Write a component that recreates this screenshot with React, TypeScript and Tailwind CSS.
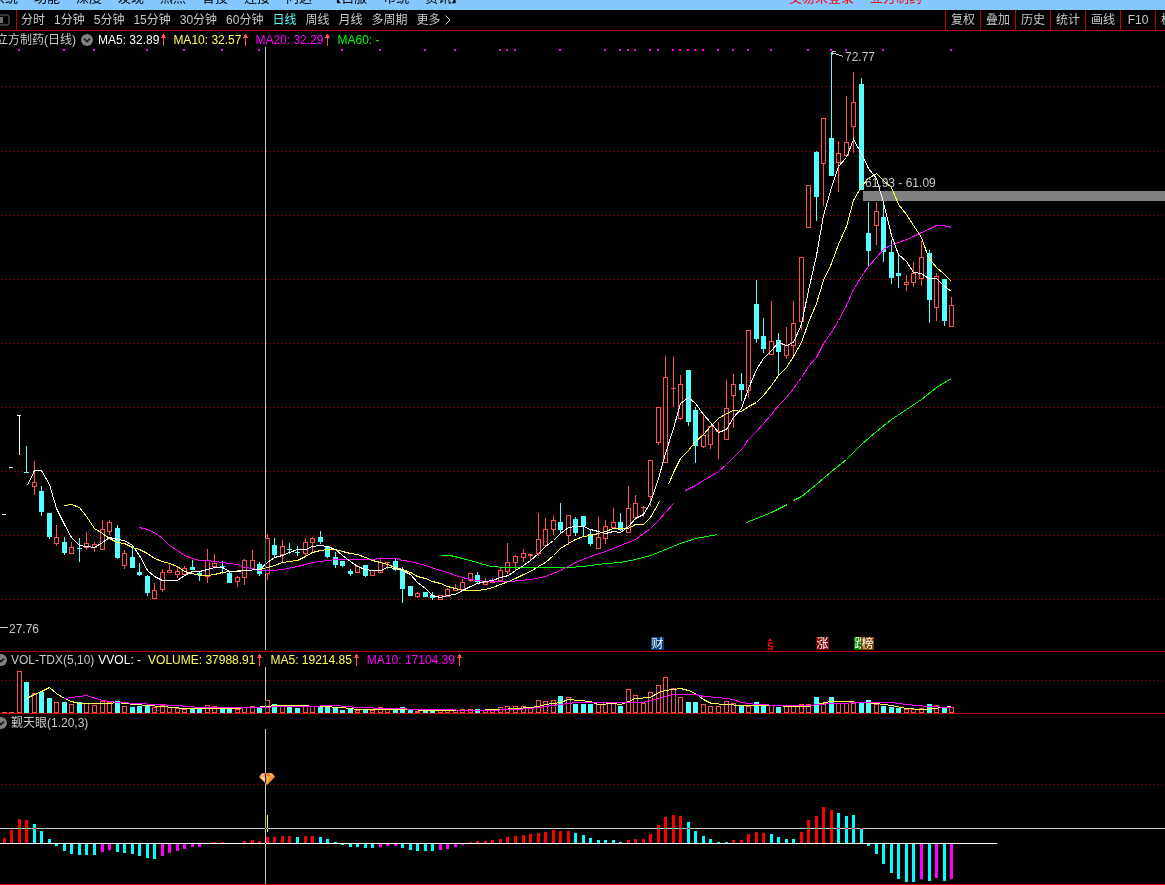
import { useState } from "react";
import clsx from "clsx";

type Kind = "r" | "c" | "w";
type Candle = [Kind, number, number, number, number];
type OscBar = [number, "r" | "c" | "m"];

const RED = "#ff5050";
const CYAN = "#54ffff";
const GRID = "#c00000";
const GRAY = "#c8c8c8";

const menus = ["系统", "功能", "深度", "发现", "热点", "智投", "连接", "问达"];
const extraMenus = ["自服", "市统", "资讯"];
const periods = ["分时", "1分钟", "5分钟", "15分钟", "30分钟", "60分钟", "日线", "周线", "月线", "多周期"];
const tools = ["复权", "叠加", "历史", "统计", "画线", "F10"];

// kind, high, body top, body bottom, low
const candles: Candle[] = [
  ["w", 514, 514, 515, 515], ["w", 467, 467, 468, 468], ["w", 415, 415, 416, 455], ["c", 446, 472, 473, 473],
  ["r", 461, 482, 487, 495], ["c", 486, 491, 512, 516], ["c", 513, 513, 537, 539], ["r", 525, 537, 544, 546],
  ["c", 537, 542, 553, 555], ["r", 542, 547, 554, 554], ["c", 538, 548, 549, 562], ["r", 532, 543, 548, 550],
  ["r", 542, 544, 548, 552], ["r", 520, 529, 550, 550], ["r", 520, 522, 532, 535], ["c", 525, 528, 558, 559],
  ["r", 550, 553, 566, 569], ["c", 545, 557, 568, 568], ["c", 563, 572, 575, 576], ["c", 575, 576, 593, 596],
  ["r", 583, 590, 599, 599], ["r", 569, 572, 590, 592], ["r", 564, 570, 573, 573], ["r", 567, 571, 575, 578],
  ["r", 566, 568, 575, 575], ["c", 560, 567, 570, 570], ["c", 571, 573, 575, 581], ["r", 549, 560, 577, 583],
  ["r", 554, 563, 567, 567], ["c", 561, 566, 567, 574], ["c", 571, 573, 583, 583], ["r", 576, 577, 582, 587],
  ["r", 559, 560, 578, 585], ["r", 550, 560, 569, 569], ["c", 562, 564, 574, 576], ["r", 534, 538, 574, 580],
  ["c", 538, 545, 555, 557], ["r", 540, 546, 555, 562], ["c", 543, 549, 550, 554], ["c", 546, 552, 553, 556],
  ["r", 538, 542, 554, 556], ["r", 537, 538, 543, 552], ["c", 531, 537, 542, 544], ["c", 546, 546, 557, 558],
  ["c", 552, 557, 565, 568], ["c", 561, 561, 566, 567], ["c", 569, 571, 574, 576], ["r", 565, 566, 573, 573],
  ["c", 565, 565, 576, 577], ["r", 570, 570, 576, 576], ["r", 558, 562, 573, 573], ["r", 562, 562, 563, 569],
  ["c", 558, 561, 570, 571], ["c", 567, 570, 589, 603], ["c", 586, 586, 596, 596], ["r", 592, 593, 597, 598],
  ["c", 592, 592, 597, 597], ["c", 592, 595, 598, 600], ["r", 595, 595, 600, 600], ["r", 588, 589, 597, 597],
  ["r", 584, 588, 591, 591], ["r", 579, 582, 590, 591], ["r", 573, 573, 581, 582], ["c", 572, 575, 582, 584],
  ["r", 578, 582, 585, 585], ["r", 578, 582, 583, 583], ["r", 567, 570, 581, 581], ["r", 543, 562, 572, 574],
  ["r", 555, 556, 563, 570], ["r", 549, 553, 558, 562], ["r", 554, 554, 556, 560], ["r", 513, 539, 554, 556],
  ["r", 518, 529, 546, 546], ["r", 516, 520, 530, 535], ["c", 503, 522, 530, 534], ["r", 515, 515, 536, 545],
  ["c", 517, 519, 533, 536], ["c", 516, 516, 526, 536], ["c", 530, 534, 544, 546], ["r", 517, 537, 549, 549],
  ["r", 520, 526, 539, 544], ["r", 508, 522, 528, 528], ["c", 513, 522, 530, 531], ["r", 486, 508, 533, 533],
  ["r", 495, 503, 518, 520], ["r", 506, 507, 508, 517], ["r", 460, 460, 497, 506], ["r", 407, 407, 443, 445],
  ["r", 356, 377, 463, 463], ["r", 357, 388, 389, 407], ["r", 375, 384, 419, 420], ["c", 370, 370, 422, 426],
  ["c", 407, 410, 446, 463], ["r", 413, 435, 447, 448], ["r", 426, 426, 445, 449], ["r", 422, 431, 432, 459],
  ["r", 380, 408, 440, 440], ["r", 374, 384, 396, 428], ["c", 373, 384, 390, 401], ["r", 330, 330, 391, 398],
  ["c", 280, 304, 339, 343], ["c", 318, 336, 349, 353], ["r", 301, 341, 355, 355], ["c", 333, 340, 352, 376],
  ["r", 327, 345, 356, 359], ["r", 301, 323, 346, 358], ["r", 257, 257, 322, 330], ["r", 185, 185, 228, 228],
  ["c", 151, 152, 197, 221], ["r", 118, 118, 164, 206], ["c", 52, 138, 176, 176], ["r", 141, 153, 163, 192],
  ["r", 96, 142, 156, 156], ["r", 72, 102, 127, 153], ["c", 78, 84, 190, 190], ["c", 202, 233, 251, 267],
  ["r", 202, 211, 226, 245], ["c", 205, 217, 252, 262], ["c", 240, 252, 278, 284], ["c", 255, 273, 276, 288],
  ["r", 275, 282, 285, 291], ["r", 262, 273, 283, 287], ["r", 241, 257, 279, 286], ["c", 250, 253, 300, 323],
  ["r", 273, 276, 308, 321], ["c", 279, 279, 321, 326], ["r", 297, 305, 327, 327],
];

const volumes = [
  712, 712, 671, 682, 693, 692, 698, 702, 702, 704, 702, 703, 705, 701, 702, 701, 706, 707, 706, 705, 707, 705, 707,
  708, 709, 708, 709, 705, 706, 709, 709, 709, 707, 706, 708, 700, 704, 706, 706, 708, 706, 706, 706, 706, 708, 710,
  709, 710, 709, 710, 707, 709, 709, 707, 709, 711, 710, 710, 710, 710, 710, 709, 709, 709, 710, 710, 707, 706, 706,
  706, 708, 700, 701, 700, 696, 697, 704, 704, 704, 704, 702, 703, 706, 689, 695, 703, 692, 685, 677, 688, 697, 702,
  702, 704, 706, 706, 701, 703, 706, 706, 702, 705, 705, 707, 706, 706, 704, 704, 697, 703, 697, 703, 703, 703, 703,
  700, 704, 706, 707, 708, 709, 709, 708, 704, 705, 708, 707,
];

const osc: OscBar[] = [
  [838, "r"], [830, "r"], [819, "r"], [820, "r"], [824, "c"], [831, "c"], [839, "c"], [846, "c"], [851, "c"],
  [854, "c"], [855, "c"], [855, "c"], [855, "c"], [852, "m"], [850, "m"], [852, "c"], [853, "c"], [854, "c"],
  [856, "c"], [858, "c"], [859, "c"], [856, "m"], [853, "m"], [851, "m"], [849, "m"], [847, "m"], [847, "m"],
  [843, "r"], [842, "r"], [842, "r"], [843, "r"], [843, "r"], [841, "r"], [840, "r"], [841, "r"], [837, "r"],
  [837, "r"], [836, "r"], [836, "r"], [837, "c"], [836, "r"], [836, "r"], [837, "c"], [839, "c"], [842, "c"],
  [845, "c"], [847, "c"], [847, "c"], [848, "c"], [848, "c"], [847, "m"], [846, "m"], [846, "m"], [848, "c"],
  [850, "c"], [851, "c"], [851, "c"], [851, "c"], [850, "m"], [849, "m"], [847, "m"], [845, "m"], [842, "r"],
  [841, "r"], [841, "r"], [840, "r"], [839, "r"], [837, "r"], [836, "r"], [835, "r"], [834, "r"], [833, "r"],
  [832, "r"], [830, "r"], [831, "r"], [831, "r"], [833, "c"], [835, "c"], [838, "c"], [840, "c"], [840, "c"],
  [840, "c"], [842, "c"], [840, "r"], [839, "r"], [839, "r"], [834, "r"], [825, "r"], [817, "r"], [815, "r"],
  [816, "r"], [822, "c"], [831, "c"], [836, "c"], [839, "c"], [842, "c"], [842, "c"], [840, "r"], [840, "r"],
  [834, "r"], [832, "r"], [833, "r"], [834, "c"], [837, "c"], [839, "c"], [839, "c"], [832, "r"], [820, "r"],
  [816, "r"], [807, "r"], [810, "r"], [813, "c"], [816, "c"], [815, "c"], [828, "c"], [846, "c"], [854, "c"],
  [864, "c"], [873, "c"], [879, "c"], [882, "c"], [882, "c"], [879, "m"], [881, "c"], [878, "m"], [881, "c"],
  [879, "m"],
];
const oscFill = { r: "#ff0000", c: "#00ffff", m: "#ff00ff" };

const priceLines: [string, string][] = [
  ["#00ff00", "440,555 450,555 462,558 477,562 490,566 507,567 568,567 583,566 605,563 620,562 635,559 650,555 665,549 680,543 695,538 717,534"],
  ["#00ff00", "746,522 756,518 771,512 787,504"],
  ["#00ff00", "793,500 801,496 816,484 831,471 846,459 853,452 861,444 876,431 891,419 906,409 921,399 936,387 951,378"],
  ["#ff00ff", "139,527 147,529 154,532 162,538 169,545 177,550 184,555 192,558 199,560 207,560 222,562 237,564 244,567 252,568 259,570 274,570 282,569 297,566 305,564 312,562 320,561 335,559 365,559 387,558 395,558 402,560 410,561 425,565 440,570 447,572 455,575 462,577 470,579 477,580 485,581 510,581 530,579 545,576 560,570 575,562 590,556 605,551 620,545 635,539 643,533 650,528 658,520 665,512 673,503"],
  ["#ff00ff", "685,490 695,485 703,480 710,476 718,471 726,464 733,457 741,449 748,439 756,431 763,423 771,414 778,405 786,397 793,388 801,377 808,366 816,357 823,343 831,332 838,320 846,305 853,289 861,276 868,266 876,257 883,249 891,244 898,242 906,239 913,236 921,232 928,229 936,225 943,225 951,227"],
  ["#ffff54", "64,505 71,504 79,507 86,516 94,528 102,533 109,538 117,542 124,543 132,547 139,549 147,553 154,558 162,561 169,563 177,566 184,571 192,573 199,575 207,575 214,574 222,572 229,571 244,570 259,569 267,567 274,565 282,562 289,561 297,560 305,556 312,552 320,550 327,549 335,549 342,551 350,553 357,554 365,557 372,560 380,562 387,564 395,567 402,569 410,572 417,576 425,578 432,581 440,583 447,586 455,588 462,590 477,590 485,589 492,587 500,584 508,581 515,578 523,574 530,571 538,566 545,562 553,555 560,548 568,543 575,539 583,536 590,535 598,533 605,531 613,528 628,528 635,524 643,524 650,517 659,501"],
  ["#ffff54", "668,484 673,472 680,458 688,450 695,441 703,434 710,426 718,418 726,413 733,410 741,411 748,406 756,402 763,395 771,385 778,375 786,367 793,356 801,342 808,322 816,303 823,280 831,263 838,244 846,226 853,200 861,186 868,178 876,173 883,180 891,187 898,204 906,214 913,225 921,237 928,257 936,267 943,273 951,281"],
  ["#ffffff", "27,485 34,470 41,470 49,484 56,508 64,524 71,537 79,545 86,546 94,547 102,542 109,537 117,539 124,540 132,545 139,555 147,570 154,576 162,580 177,580 184,575 192,571 199,571 207,569 214,567 222,567 229,571 237,571 244,570 259,569 267,562 274,557 282,555 289,552 297,549 305,549 312,546 320,545 327,546 335,549 342,555 350,561 357,566 365,569 372,570 380,570 387,567 395,568 402,570 410,574 417,582 425,588 432,595 440,597 447,595 455,594 462,590 470,586 477,583 485,581 492,580 500,577 508,575 515,570 523,565 530,560 538,553 545,546 553,540 560,533 568,527 575,526 583,526 590,529 598,531 605,533 613,531 620,532 628,526 635,518 643,514 650,502 658,478 665,453 673,428 680,403 688,397 695,403 703,414 710,422 718,432 726,429 733,417 741,408 748,388 756,369 763,358 771,350 778,342 786,345 793,342 801,324 808,290 816,255 823,215 831,187 838,166 846,157 853,139 861,153 868,168 876,178 883,202 891,235 898,254 906,261 913,272 921,273 928,278 936,278 943,285 951,291"],
];

const volumeLines: [string, string][] = [
  ["#ffff54", "26,698 34,694 41,691 49,687 56,693 64,698 71,701 79,703 109,703 117,702 124,703 147,705 162,706 184,708 207,708 229,708 252,707 267,706 274,705 297,705 320,706 342,707 357,709 410,709 425,710 470,710 500,709 515,708 530,707 538,706 545,704 560,702 568,699 590,701 598,704 613,703 620,704 628,701 635,698 650,697 658,692 665,690 673,689 680,688 688,690 695,693 703,699 711,703 726,704 741,705 771,705 793,706 808,706 816,704 830,701 846,701 861,702 876,703 891,705 906,708 921,709 943,707 951,706"],
  ["#ff00ff", "64,698 86,695 102,700 117,702 139,703 154,704 177,705 199,707 259,707 282,706 305,706 335,705 357,707 387,708 425,709 485,710 515,709 530,708 545,706 560,704 575,702 643,702 658,698 673,694 695,694 703,696 718,697 733,699 741,702 756,704 780,705 808,705 830,703 868,702 891,702 906,704 928,706 951,707"],
];

const signalDots = [
  18, 63, 93, 146, 183, 221, 258, 341, 379, 424, 454, 499, 506, 514, 559, 604, 619, 627, 634, 649, 657, 672, 679, 687,
  694, 702, 717, 732, 747, 770, 807, 830, 845, 882, 950,
];

const barX = (i: number) => Math.floor(4.29 + 7.518 * i);

function GridLine({ y }: { y: number }) {
  return <line x1="2" x2="100%" y1={y + 0.5} y2={y + 0.5} stroke={GRID} strokeDasharray="1 3" />;
}

function Crosshair({ top, bottom }: { top: number; bottom: number }) {
  return <rect x="265" y={top} width="1" height={bottom - top} fill={GRAY} className="mix-blend-difference" />;
}

function Lines({ data }: { data: [string, string][] }) {
  return (
    <g fill="none" transform="translate(0.5 0.5)">
      {data.map(([color, points], i) => (
        <polyline key={i} points={points} stroke={color} />
      ))}
    </g>
  );
}

function UpArrow() {
  return (
    <svg className="ml-px h-3 w-[7px] shrink-0" viewBox="0 0 7 12" shapeRendering="crispEdges" aria-hidden="true">
      <path d="M3 0h1v1h1v2h1v1H1V3h1V1h1z M3 4h1v8H3z" fill={RED} />
    </svg>
  );
}

function Toggle({ label }: { label: string }) {
  return (
    <button type="button" aria-label={label} className="h-3 w-3 shrink-0">
      <svg viewBox="0 0 12 12" className="h-3 w-3">
        <circle cx="6" cy="6" r="6" fill="#808080" />
        <path d="M3 4.5 6 7.5 9 4.5" fill="none" stroke="#141414" strokeWidth="1.6" />
      </svg>
    </button>
  );
}

function Badge({ x, fill, text, width = 13 }: { x: number; fill: string; text: string; width?: number }) {
  return (
    <g>
      <path d={`M${x} 637h${width - 1}l1 1v12h-${width}z`} fill={fill} />
      <text x={x + 0.5} y="648" fill="#ffffff">
        {text}
      </text>
    </g>
  );
}

function PriceChart() {
  return (
    <svg className="block h-[604px] w-full text-xs" shapeRendering="crispEdges" role="img" aria-label="日线">
      <g transform="translate(0 -47)">
        {[86, 151, 215, 279, 343, 407, 471, 535, 599].map((y) => (
          <GridLine key={y} y={y} />
        ))}
        {signalDots.map((x) => (
          <rect key={x} x={x} y="49" width="2" height="2" fill="#ff00ff" />
        ))}
        <rect x="863" y="191" width="100%" height="10" fill="#808080" />
        {candles.map(([kind, high, top, bottom, low], i) => {
          const x = barX(i);
          const color = kind === "r" ? RED : kind === "c" ? CYAN : "#ffffff";
          const hollow = kind === "r" && bottom - top > 2;
          return (
            <g key={i} fill={color}>
              <rect x={x} y={high} width="1" height={low - high} />
              <rect x={x - 2} y={top} width={kind === "w" ? 4 : 5} height={bottom - top} />
              {hollow && <rect x={x - 1} y={top + 1} width="3" height={bottom - top - 2} fill="#000000" />}
            </g>
          );
        })}
        <Lines data={priceLines} />
        <path d="M832 51.5h4M832.5 51v4M832 52.5l11 4" fill="none" stroke={GRAY} />
        <rect x="0" y="627" width="8" height="1" fill={GRAY} />
        <g fill={GRAY}>
          <text x="845" y="61">72.77</text>
          <text x="865" y="187">61.93 - 61.09</text>
          <text x="9" y="633">27.76</text>
        </g>
        <Badge x={651} fill="#003c78" text="财" />
        <g fill="#ff0000">
          <path d="M769 639h2v1h1v1h-4v-1h1z" />
          <text x="767" y="650" className="text-[10px] font-bold">S</text>
        </g>
        <Badge x={816} fill="#800000" text="涨" />
        <Badge x={854} fill="#008000" text="跌" />
        <Badge x={861} fill="#804000" text="榜" />
        <Crosshair top={47} bottom={650} />
      </g>
    </svg>
  );
}

function VolumeChart() {
  return (
    <svg className="block h-[46px] w-full" shapeRendering="crispEdges" role="img" aria-label="VOL-TDX">
      <g transform="translate(0 -667)">
        <GridLine y={680} />
        {volumes.map((top, i) => {
          const x = barX(i) - 2;
          const up = candles[i][0] !== "c";
          return (
            <g key={i}>
              <rect x={x} y={top} width="5" height={713 - top} fill={up ? RED : CYAN} />
              {up && top < 711 && <rect x={x + 1} y={top + 1} width="3" height={711 - top} fill="#000000" />}
            </g>
          );
        })}
        <Lines data={volumeLines} />
        <Crosshair top={667} bottom={712} />
      </g>
    </svg>
  );
}

function OscChart() {
  return (
    <svg className="block h-[155px] w-full" shapeRendering="crispEdges" role="img" aria-label="觐天眼">
      <g transform="translate(0 -729)">
        <GridLine y={784} />
        {osc.map(([y, color], i) => (
          <rect
            key={i}
            x={barX(i) - 1}
            y={Math.min(y, 843)}
            width="3"
            height={Math.abs(843 - y)}
            fill={oscFill[color]}
          />
        ))}
        <rect x="0" y="843" width="997" height="1" fill="#ffffff" />
        <rect x="267" y="815" width="1" height="17" fill="#ffff00" />
        <g shapeRendering="geometricPrecision">
          <path d="M262 773h10l3 4-8 8-8-8z" fill="#f09040" />
          <path d="M262 774h10l2 2.500h-14z" fill="#ffc070" />
          <path d="M263 776l2-2h4l2 2z" fill="#f0702c" />
          <path d="M260 777h4l3 7z" fill="#ffd9a0" />
          <path d="M267 777h3l-3 7z" fill="#ffb050" />
        </g>
        <rect x="0" y="828" width="100%" height="1" fill={GRAY} className="mix-blend-difference" />
        <Crosshair top={729} bottom={884} />
      </g>
    </svg>
  );
}

export default function App() {
  const [period, setPeriod] = useState("日线");

  return (
    <main className="w-full overflow-hidden bg-black font-['Liberation_Sans','Noto_Sans_CJK_SC',sans-serif] text-xs text-[#c8c8c8]">
      {/* menu bar */}
      <header className="flex h-[10px] items-end overflow-hidden bg-[#84c8ff] pb-[5px] text-[13px] leading-[14px] whitespace-nowrap text-black">
        <nav className="-ml-2 flex gap-4">
          {menus.map((item) => (
            <button key={item} type="button">
              {item}
            </button>
          ))}
          <div className="flex">
            <span>【</span>
            <div className="flex gap-4">
              {extraMenus.map((item) => (
                <button key={item} type="button">
                  {item}
                </button>
              ))}
            </div>
            <span>】</span>
          </div>
        </nav>
        <p className="mr-[243px] ml-auto flex gap-4 text-[#ff0000]">
          <span>交易未登录</span>
          <span>立方制药</span>
        </p>
      </header>

      {/* period bar */}
      <div className="flex h-[21px] items-stretch border-b border-[#c00000] whitespace-nowrap">
        <button type="button" aria-label="侧栏" className="flex w-4 items-center">
          <svg viewBox="0 0 10 12" className="h-3 w-[10px]">
            <rect x="-4" y="1" width="13" height="10" rx="2" fill="none" stroke="#707070" />
            <rect x="0" y="3" width="3" height="6" fill="#707070" />
          </svg>
        </button>
        <nav className="flex items-center gap-[9px] border-l border-[#c00000] pl-1">
          {periods.map((item) => (
            <button
              key={item}
              type="button"
              onClick={() => setPeriod(item)}
              className={clsx(item === period && "text-[#54ffff]")}
            >
              {item}
            </button>
          ))}
          <button type="button" className="flex items-center gap-1">
            更多
            <svg viewBox="0 0 6 10" className="h-[10px] w-[6px]" fill="none" stroke="currentColor">
              <path d="M0.500 0.500 5 5 0.500 9.500" />
            </svg>
          </button>
        </nav>
        <div className="ml-auto flex">
          {tools.map((item) => (
            <button key={item} type="button" className="w-[35px] border-l border-[#c00000]">
              {item}
            </button>
          ))}
          <button type="button" className="w-[10px] overflow-hidden border-l border-[#c00000] pl-[5px] text-left">
            标
          </button>
        </div>
      </div>

      <section className="border-b border-[#c00000]">
        <div className="flex h-4 items-center gap-[6px] pt-0.5 leading-4 whitespace-nowrap">
          <div className="-ml-1 flex items-center gap-[5px]">
            <h1>立方制药(日线)</h1>
            <Toggle label="展开均线" />
            <span className="flex items-center text-white">
              MA5: 32.89
              <UpArrow />
            </span>
          </div>
          <span className="flex items-center text-[#ffff54]">
            MA10: 32.57
            <UpArrow />
          </span>
          <span className="flex items-center text-[#ff00ff]">
            MA20: 32.29
            <UpArrow />
          </span>
          <span className="text-[#00ff00]">MA60: -</span>
        </div>
        <PriceChart />
      </section>

      <section className="border-b border-[#c00000]">
        <div className="flex h-[15px] items-center gap-[7px] leading-4 whitespace-nowrap">
          <div className="-ml-[5px] flex items-center gap-1">
            <Toggle label="展开成交量" />
            <h2>VOL-TDX(5,10)</h2>
            <span className="text-white">VVOL: -</span>
          </div>
          <span className="flex items-center text-[#ffff54]">
            VOLUME: 37988.91
            <UpArrow />
          </span>
          <span className="flex items-center text-[#ffff54]">
            MA5: 19214.85
            <UpArrow />
          </span>
          <span className="flex items-center text-[#ff00ff]">
            MA10: 17104.39
            <UpArrow />
          </span>
        </div>
        <VolumeChart />
      </section>

      <section className="border-b border-[#c00000]">
        <div className="-ml-[5px] flex h-[15px] items-center gap-1 pt-0.5 leading-4 whitespace-nowrap">
          <Toggle label="展开指标" />
          <h2>觐天眼(1.20,3)</h2>
        </div>
        <OscChart />
      </section>
    </main>
  );
}
